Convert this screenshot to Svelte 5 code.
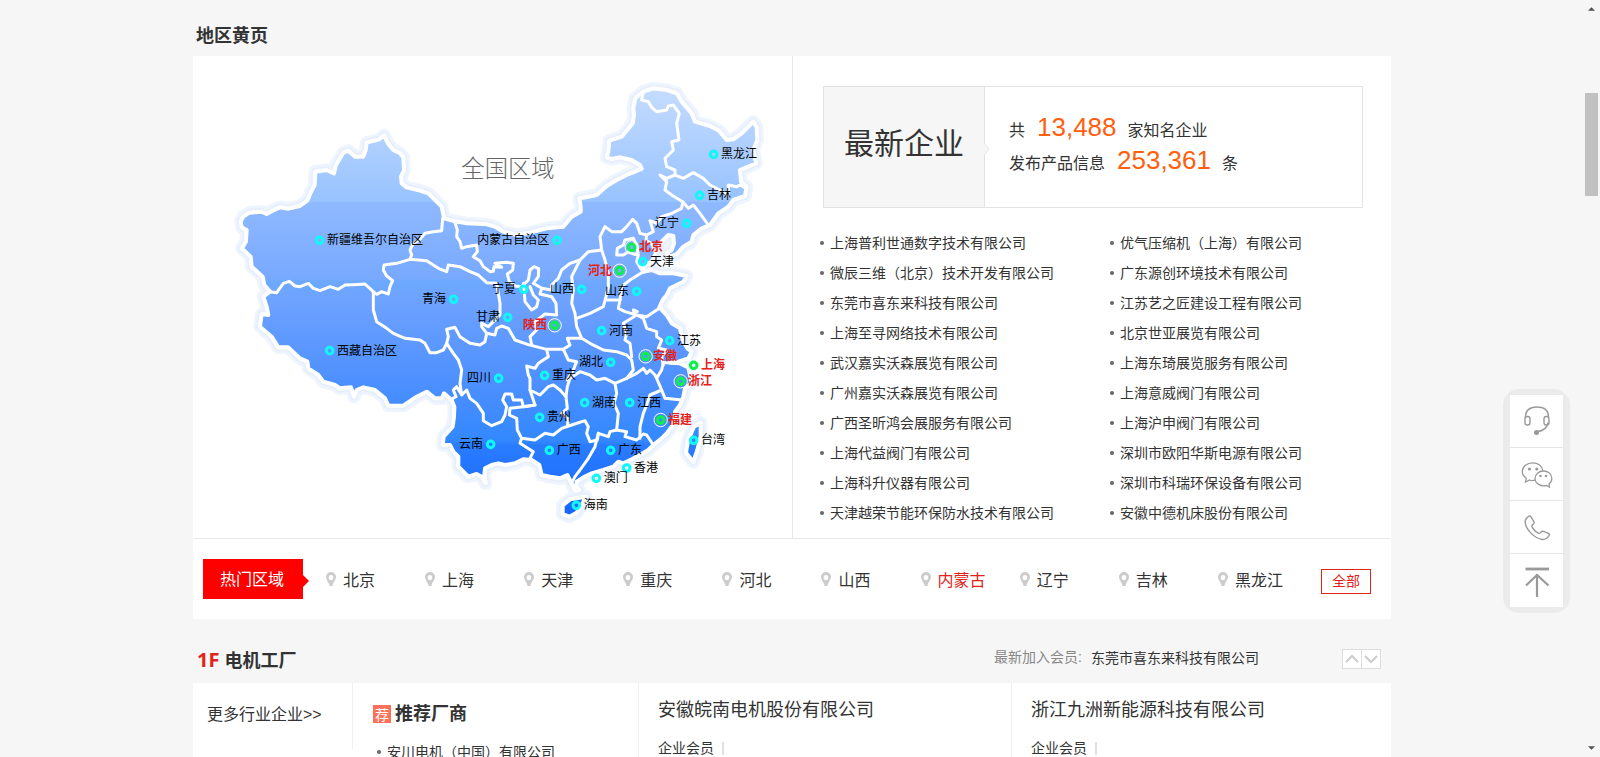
<script>
  const provinces = [
    { name: '新疆维吾尔自治区', x: 299, y: 511 },
    { name: '青海', x: 701, y: 688, left: true },
    { name: '西藏自治区', x: 329, y: 842 },
    { name: '四川', x: 836, y: 925, left: true },
    { name: '云南', x: 812, y: 1123, left: true },
    { name: '黑龙江', x: 1481, y: 253 },
    { name: '吉林', x: 1439, y: 376 },
    { name: '辽宁', x: 1400, y: 460, left: true },
    { name: '内蒙古自治区', x: 1011, y: 511, left: true },
    { name: '北京', x: 1235, y: 532, hot: true },
    { name: '天津', x: 1268, y: 575 },
    { name: '河北', x: 1199, y: 602, left: true, hot: true },
    { name: '宁夏', x: 911, y: 658, left: true },
    { name: '山西', x: 1085, y: 658, left: true },
    { name: '山东', x: 1250, y: 664, left: true },
    { name: '甘肃', x: 863, y: 742, left: true },
    { name: '陕西', x: 1004, y: 766, left: true, hot: true },
    { name: '河南', x: 1145, y: 782 },
    { name: '江苏', x: 1349, y: 812 },
    { name: '安徽', x: 1277, y: 859, hot: true },
    { name: '湖北', x: 1172, y: 877, left: true },
    { name: '上海', x: 1421, y: 886, hot: true },
    { name: '重庆', x: 974, y: 916 },
    { name: '浙江', x: 1382, y: 934, hot: true },
    { name: '湖南', x: 1094, y: 998 },
    { name: '江西', x: 1229, y: 998 },
    { name: '贵州', x: 959, y: 1042 },
    { name: '福建', x: 1322, y: 1050, hot: true },
    { name: '广西', x: 988, y: 1141 },
    { name: '广东', x: 1172, y: 1141 },
    { name: '台湾', x: 1421, y: 1111 },
    { name: '香港', x: 1220, y: 1194 },
    { name: '澳门', x: 1129, y: 1225 },
    { name: '海南', x: 1069, y: 1306 }
  ];

  const companies = [
    '上海普利世通数字技术有限公司', '优气压缩机（上海）有限公司',
    '微辰三维（北京）技术开发有限公司', '广东源创环境技术有限公司',
    '东莞市喜东来科技有限公司', '江苏艺之匠建设工程有限公司',
    '上海至寻网络技术有限公司', '北京世亚展览有限公司',
    '武汉嘉实沃森展览有限公司', '上海东琦展览服务有限公司',
    '广州嘉实沃森展览有限公司', '上海意威阀门有限公司',
    '广西圣昕鸿会展服务有限公司', '上海沪申阀门有限公司',
    '上海代益阀门有限公司', '深圳市欧阳华斯电源有限公司',
    '上海科升仪器有限公司', '深圳市科瑞环保设备有限公司',
    '天津越荣节能环保防水技术有限公司', '安徽中德机床股份有限公司'
  ];

  const areas = ['北京', '上海', '天津', '重庆', '河北', '山西', '内蒙古', '辽宁', '吉林', '黑龙江'];
  const activeArea = '内蒙古';

  const mainland = 'M62 455 70 440 88 428 125 425 140 432 158 422 180 412 205 416 240 408 262 392 272 368 284 345 286 305 320 300 342 310 348 285 370 248 385 242 405 260 430 260 437 240 440 218 478 208 492 196 505 222 520 240 540 250 550 262 552 300 543 320 545 340 560 352 600 362 625 370 650 395 665 410 672 445 705 454 740 460 800 463 825 470 850 485 890 495 930 488 980 475 1030 470 1055 440 1082 425 1082 410 1078 385 1105 380 1130 375 1160 348 1190 330 1220 315 1245 305 1265 296 1260 285 1235 270 1200 262 1175 267 1160 262 1165 245 1168 212 1205 200 1220 182 1238 160 1242 135 1240 115 1246 85 1270 65 1300 55 1340 60 1370 70 1385 95 1415 130 1425 155 1470 168 1497 182 1520 210 1540 208 1565 190 1600 155 1610 172 1612 210 1600 240 1608 280 1560 300 1563 335 1580 350 1575 378 1540 390 1525 410 1495 430 1470 465 1445 475 1420 495 1415 515 1390 530 1370 552 1350 560 1340 550 1355 540 1362 520 1360 498 1345 495 1325 515 1310 545 1295 575 1268 588 1270 605 1295 600 1320 610 1360 610 1400 618 1390 635 1350 655 1340 675 1328 690 1318 712 1340 735 1355 760 1380 775 1388 810 1402 835 1415 845 1405 865 1375 875 1350 878 1380 880 1405 892 1412 925 1415 940 1395 955 1390 980 1380 1005 1365 1025 1365 1045 1355 1070 1340 1090 1325 1105 1300 1125 1285 1140 1260 1155 1235 1168 1210 1180 1195 1175 1180 1190 1150 1200 1115 1210 1090 1222 1070 1235 1068 1250 1078 1260 1065 1262 1055 1240 1042 1215 1020 1225 990 1220 965 1215 958 1185 935 1170 910 1168 885 1180 855 1185 835 1180 815 1185 795 1195 793 1215 797 1240 785 1220 770 1212 745 1220 725 1200 715 1190 715 1160 700 1145 690 1125 668 1125 671 1100 698 1070 702 1040 703 1010 695 990 672 970 665 985 645 985 620 965 590 980 550 1007 505 1007 495 985 465 960 430 952 410 960 402 980 393 952 360 955 345 945 310 935 295 915 265 895 262 875 240 865 205 832 175 832 155 800 120 770 125 732 145 735 140 710 130 680 150 665 133 645 128 620 95 590 92 560 66 535 78 515 80 480 65 472Z';
  const islands = 'M1442 1058 1422 1070 1404 1112 1398 1148 1420 1176 1432 1140 1442 1100ZM1028 1306 1050 1288 1098 1280 1082 1310 1070 1328 1048 1340 1028 1332Z';

  const borders = [
    'M150 665 170 668 190 640 208 634 225 648 240 650 265 640 280 655 300 662 330 650 355 658 375 645 400 644 435 642 460 665 470 673 485 665 505 672 510 650 518 632 500 618 490 600 492 585 530 580 570 568 575 555 570 540 580 520 598 510 615 490 640 485 665 482 668 445',
    'M570 568 620 572 655 595 680 605 685 585 720 590 750 605 775 615 800 638 830 640 840 700 840 735 820 755 805 770 785 760 785 770 800 790 825 795 830 775 845 768 865 775 885 810 925 824 980 838',
    'M705 457 712 480 710 500 720 515 725 535 740 530 770 525 772 545 760 560 780 572 790 590 810 605 820 604 822 590 845 592 825 580 860 577 880 580 878 600 862 612 868 635 885 648 905 650 925 630 930 600 942 590 956 596 955 620 940 640 965 655 960 672 995 680 1008 700 1010 735 975 732 945 755 950 780 930 800 935 824',
    'M460 665 460 720 470 755 500 775 520 790 555 805 600 810 615 820 630 848 650 848 670 840 680 820 685 800 680 778 705 772 720 800 750 820 780 825 795 815 800 790',
    'M680 820 700 850 715 870 725 900 720 940 725 975 710 950 700 960 708 980 690 990M725 975 740 960 750 985 770 1000 790 1030 790 1052 815 1067 845 1055 855 1035 860 1010 848 990 855 972 875 972 880 990 905 990 910 1010 945 1005',
    'M911 640 915 695 935 720 950 710 955 690 940 675 930 650',
    'M980 838 985 860 955 880 945 895 920 888 925 915 930 925 930 960 960 975 985 950 1000 945 1020 960 1038 980 1042 950 1050 925 1080 905 1110 915 1130 930 1155 925 1185 940M980 838 1030 838 1045 870 1070 875 1060 900 1042 930',
    'M930 960 935 975 945 1005 910 1010 870 1015 868 1035 890 1045 892 1080 905 1105 945 1110 975 1090 1000 1095 1025 1075 1055 1065 1095 1052 1105 1070 1100 1090 1110 1115 1132 1110 1135 1090',
    'M1038 980 1042 1015 1025 1030 1045 1045 1042 1068M905 1105 900 1120 940 1145 930 1165',
    'M1135 1090 1125 1130 1105 1165 1080 1200 1065 1220 1055 1240M1135 1090 1165 1100 1170 1085 1190 1080 1220 1085 1215 1100 1250 1110 1270 1092 1280 1095 1300 1125',
    'M1185 940 1190 970 1182 1000 1195 1030 1190 1080M1185 940 1220 925 1250 910 1270 895 1280 910 1290 900 1305 915 1310 925 1325 960 1290 975 1280 1005 1270 1030 1260 1070 1260 1105M1325 960 1335 985 1385 990M1310 925 1325 900 1330 878 1360 878',
    'M1030 838 1050 825 1042 805 1085 805 1110 820 1150 840 1190 845 1220 855 1235 870 1240 900 1220 925',
    'M1080 570 1055 620 1060 660 1055 700 1065 730 1070 770 1085 805M1070 745 1110 730 1150 710 1158 680 1165 650 1165 610 1155 570 1145 540',
    'M1160 690 1200 690 1195 715 1215 725 1250 735 1210 760 1220 790 1215 810 1230 820 1235 860M1250 735 1270 745 1280 775 1310 785 1310 800 1325 810 1315 835 1340 840 1325 860 1330 885M1250 735 1280 740 1310 720 1325 712M1245 738 1240 720 1252 725',
    'M965 655 995 660 995 645 1015 625 1025 600 1050 580 1080 570 1105 545 1145 540 1140 500 1155 470 1175 485 1205 485 1220 470 1238 448 1250 460 1260 490 1280 495 1278 512 1295 520 1305 545M1280 495 1300 485 1290 452 1310 460 1325 440 1355 430 1385 415 1388 395',
    'M1270 605 1230 630 1205 650 1200 690M1190 555 1192 535 1210 525 1215 510 1240 505 1250 525 1255 555 1240 552 1225 545 1210 555ZM1255 555 1250 575 1265 600',
    'M1270 65 1265 90 1285 95 1295 112 1310 125 1340 120 1345 108 1360 105 1378 130 1370 160 1377 210 1355 215 1360 240 1335 265 1340 290 1365 300 1365 315 1390 325 1420 308 1450 325 1470 345 1500 360 1525 375 1525 345 1550 350 1560 345 1578 355M1365 315 1340 325 1320 315 1340 335 1335 360 1355 375 1388 395 1405 415 1420 405 1440 430 1465 465'
  ];
</script>

<div class="page">
  <main class="wrap">
    <h2 class="section-title">地区黄页</h2>
    <section class="panel">
      <div class="region">
        <div class="map">
          <svg viewBox="0 0 1680 1392" role="group" aria-label="全国区域">
            <defs>
              <linearGradient id="land" gradientUnits="userSpaceOnUse" x1="0" y1="50" x2="0" y2="1330">
                <stop offset="0" stop-color="#c5dcff" />
                <stop offset="0.268" stop-color="#98c3ff" />
                <stop offset="0.272" stop-color="#8fb9ff" />
                <stop offset="0.45" stop-color="#78a9ff" />
                <stop offset="0.455" stop-color="#6ca9ff" />
                <stop offset="0.5" stop-color="#6ea2ff" />
                <stop offset="0.7" stop-color="#4c8fff" />
                <stop offset="0.83" stop-color="#3388ff" />
                <stop offset="0.84" stop-color="#2a7cff" />
                <stop offset="1" stop-color="#1766ff" />
              </linearGradient>
            </defs>
            <g stroke-linejoin="round" stroke-linecap="round">
              <path d={mainland + islands} fill="none" stroke="#eff5ff" stroke-width="40" />
              <path d={mainland + islands} fill="none" stroke="#e7effc" stroke-width="24" />
              <path d={mainland + islands} fill="url(#land)" stroke="#fff" stroke-width="12" />
              {#each borders as d}
                <path {d} fill="none" stroke="#fff" stroke-width="9" />
              {/each}
            </g>
            <text class="map-title" x="724" y="322">全国区域</text>
            {#each provinces as p}
              <a href="#area">
                {#if p.hot}<circle cx={p.x} cy={p.y} r="20" fill="none" stroke="#fff" stroke-width="3" />{/if}
                <circle cx={p.x} cy={p.y} r="10" fill="none" stroke={p.hot ? '#0cf04c' : '#0ff7f7'} stroke-width="9" />
                <text
                  class:hot={p.hot}
                  x={p.left ? p.x - 23 : p.x + 22}
                  y={p.y + 12}
                  text-anchor={p.left ? 'end' : 'start'}>{p.name}</text>
              </a>
            {/each}
          </svg>
        </div>
        <div class="latest">
          <div class="stats">
            <h3>最新企业</h3>
            <div class="figures">
              <svg class="notch" viewBox="0 0 6 12" aria-hidden="true"><path d="M0 0 5 6 0 12" fill="#f6f6f6" stroke="#e3e3e3" /></svg>
              <p>共<strong>13,488</strong>家知名企业</p>
              <p>发布产品信息<strong>253,361</strong>条</p>
            </div>
          </div>
          <ul class="companies">
            {#each companies as c}
              <li><a href="#company">{c}</a></li>
            {/each}
          </ul>
        </div>
      </div>
      <nav class="hot-areas" aria-label="热门区域">
        <span class="tag">热门区域</span>
        <ul>
          {#each areas as a}
            <li>
              <svg viewBox="0 0 10 14" aria-hidden="true"><path fill-rule="evenodd" d="M5 0a5 5 0 0 0-5 5c0 3 3 5 3.500 9h3C7 10 10 8 10 5a5 5 0 0 0-5-5Zm0 3a2.300 2.600 0 0 1 0 5.200A2.300 2.600 0 0 1 5 3Z" fill="#ccc" /></svg>
              <a href="#area" class:active={a === activeArea}>{a}</a>
            </li>
          {/each}
        </ul>
        <a class="all" href="#all">全部</a>
      </nav>
    </section>

    <header class="floor-head">
      <h2><span>1F</span>电机工厂</h2>
      <div class="joined">
        <span>最新加入会员:</span>
        <a href="#company">东莞市喜东来科技有限公司</a>
        <div class="pager">
          <button aria-label="上一个"><svg viewBox="0 0 14 10"><path d="M1 8 7 2l6 6" /></svg></button>
          <button aria-label="下一个"><svg viewBox="0 0 14 10"><path d="M1 2l6 6 6-6" /></svg></button>
        </div>
      </div>
    </header>
    <section class="floor">
      <div class="more"><a href="#more">更多行业企业&gt;&gt;</a></div>
      <div class="picks">
        <h3><i>荐</i>推荐厂商</h3>
        <ul><li><a href="#company">安川电机（中国）有限公司</a></li></ul>
      </div>
      <article>
        <h4>安徽皖南电机股份有限公司</h4>
        <p>企业会员</p>
      </article>
      <article>
        <h4>浙江九洲新能源科技有限公司</h4>
        <p>企业会员</p>
      </article>
    </section>
  </main>

  <aside class="tools">
    <a href="#service" aria-label="客服">
      <svg viewBox="0 0 32 32" fill="none" stroke="#999" stroke-width="1.400"><path d="M4.500 12C4.500 5 9.500 2 16 2s11.500 3 11.500 10M27 17.500c-1 5.500-5 8.500-10.500 9" /><rect x="4" y="11.500" width="5" height="8.500" rx="2.200" /><rect x="23" y="11.500" width="5" height="8.500" rx="2.200" /><circle cx="15.500" cy="27.500" r="1.800" fill="#999" /></svg>
    </a>
    <a href="#wechat" aria-label="微信">
      <svg viewBox="0 0 32 32" fill="none" stroke="#999" stroke-width="1.300"><path d="M14 22.200c-2 .6-3.800.5-5.500-.2L4.500 24l.8-3.800C2.800 18.500 1.300 16 1.300 13.500 1.300 8.500 6 4.800 11.800 4.800c5.300 0 9.300 3.200 10 7.800" /><path d="M30.800 20.500c0 2.200-1 4.200-2.800 5.500l.5 3-3-1.500c-5.800 1.500-11.500-2.200-11.500-7 0-4.300 3.800-7.500 8.500-7.500s8.300 3.200 8.300 7.500Z" /><g fill="#999" stroke="none"><circle cx="8.500" cy="11" r="1.600" /><circle cx="15.800" cy="11" r="1.600" /><circle cx="19.500" cy="18" r="1.300" /><circle cx="25" cy="18" r="1.300" /></g></svg>
    </a>
    <a href="#phone" aria-label="电话">
      <svg viewBox="0 0 32 32" fill="none" stroke="#999" stroke-width="1.400" stroke-linejoin="round"><path d="M4.200 10c.5-2.300 2-3.800 3.700-4.800.9-.5 1.600-.1 2.100.7l2.900 4.800c.5.900.3 1.600-.4 2.300-2.200 1.800-2 2.300-.9 4 1.500 2.200 3.500 4.200 5.700 5.200 1.100.5 1.800.2 2.700-1 .8-1 1.500-1.200 2.500-.8l5 2c1.100.5 1.200 1.200.6 2.100-1.400 2.500-3.800 4.200-6.800 4C13.700 27.500 3.700 18 4.200 10Z" /></svg>
    </a>
    <a href="#top" aria-label="返回顶部">
      <svg viewBox="0 0 32 32" fill="none" stroke="#999" stroke-width="2.200"><path d="M4.500 4h23.500" stroke-width="2.800" /><path d="M5 20.500 16 10l11.500 10.500M16 10v22" /></svg>
    </a>
  </aside>

  <div class="scroller" aria-hidden="true">
    <svg viewBox="0 0 8 4"><path d="M0 4 4 0l4 4Z" /></svg>
    <span></span>
    <svg viewBox="0 0 8 4"><path d="M0 0h8L4 4Z" /></svg>
  </div>
</div>

<style>
  :global(body) {
    margin: 0;
    background: #f6f6f6;
    color: #333;
    font: 14px/30px "Liberation Sans", "Noto Sans CJK SC", sans-serif;
  }
  * { box-sizing: border-box; }
  h2, h3, h4, p, ul { margin: 0; padding: 0; }
  ul { list-style: none; }
  a { color: inherit; text-decoration: none; }

  .page {
    height: 100vh;
    overflow: hidden;
    padding-right: 16px;
  }
  .wrap { max-width: 1198px; margin: 0 auto; }
  .section-title {
    padding: 21px 3px 5px;
    font-size: 18px;
  }
  .panel { background: #fff; }
  .region {
    display: grid;
    grid-template-columns: 1fr 1fr;
    border-bottom: 1px solid #e8e8e8;
  }
  .map { padding: 14px 12px 4px 27px; }
  .map svg { display: block; width: 100%; }
  .map text { font-size: 36px; fill: #000; }
  .map text.hot { fill: #e2231a; font-weight: 700; }
  .map text.map-title { font-size: 70px; font-weight: 300; fill: #666; }

  .latest {
    border-left: 1px solid #e8e8e8;
    padding: 30px 28px 9px 30px;
  }
  .stats {
    display: flex;
    height: 122px;
    border: 1px solid #e3e3e3;
  }
  .stats h3 {
    width: 161px;
    background: #f6f6f6;
    border-right: 1px solid #e3e3e3;
    font-size: 30px;
    font-weight: 400;
    line-height: 114px;
    text-align: center;
  }
  .figures {
    position: relative;
    padding: 24px;
    font-size: 16px;
    line-height: 33px;
  }
  .figures p { height: 33px; }
  .figures strong {
    margin: 0 11px 0 12px;
    color: #ff6010;
    font-size: 26px;
    font-weight: 400;
  }
  .notch {
    position: absolute;
    left: -1px;
    top: 56px;
    width: 6px;
    height: 12px;
  }
  .companies {
    display: grid;
    grid-template-columns: 290px 1fr;
    margin: 20px -20px 0 -3px;
  }
  .companies li, .picks li {
    display: flex;
    align-items: center;
    gap: 6px;
    white-space: nowrap;
  }
  .companies li::before, .picks li::before {
    content: "";
    width: 4px;
    height: 4px;
    border-radius: 2px;
    background: #666;
  }

  .hot-areas {
    display: flex;
    align-items: center;
    height: 80px;
    padding: 0 20px 0 10px;
    font-size: 16px;
  }
  .tag {
    position: relative;
    width: 100px;
    height: 40px;
    padding-right: 2px;
    background: #f00;
    color: #fff;
    line-height: 42px;
    text-align: center;
  }
  .tag::after {
    content: "";
    position: absolute;
    left: 100%;
    top: 16px;
    border: 6px solid transparent;
    border-left-color: #f00;
    border-right: 0;
  }
  .hot-areas ul {
    flex: 1;
    display: grid;
    grid-template-columns: repeat(10, 1fr);
    padding-left: 23px;
  }
  .hot-areas li {
    display: flex;
    align-items: center;
    gap: 7px;
    line-height: 34px;
    white-space: nowrap;
  }
  .hot-areas li a { padding-top: 4px; }
  .hot-areas li svg { width: 10px; height: 14px; }
  .hot-areas .active { color: #e2231a; }
  .all {
    width: 50px;
    margin-left: 4px;
    margin-top: 4px;
    border: 1px solid #e2231a;
    color: #e2231a;
    font-size: 14px;
    line-height: 23px;
    text-align: center;
  }

  .floor-head {
    display: flex;
    justify-content: space-between;
    align-items: center;
    height: 64px;
    padding: 16px 10px 0 4px;
  }
  .floor-head h2 { padding-top: 2px; font-size: 18px; }
  .floor-head h2 span {
    margin-right: 5px;
    color: #e2231a;
    font: 700 20px/30px "Noto Sans", sans-serif;
  }
  .joined { display: flex; align-items: center; line-height: 28px; }
  .joined span { color: #888; margin-right: 9px; padding-bottom: 4px; }
  .joined a { padding-bottom: 2px; }
  .pager { display: flex; margin-left: 83px; }
  .pager button {
    display: flex;
    align-items: center;
    justify-content: center;
    width: 20px;
    height: 20px;
    padding: 0;
    border: 1px solid #ddd;
    background: #fff;
  }
  .pager button + button { margin-left: -1px; }
  .pager svg { width: 14px; height: 10px; fill: none; stroke: #ccc; stroke-width: 2; }

  .floor {
    display: grid;
    grid-template-columns: 160px 286px 373px 1fr;
    background: #fff;
  }
  .more {
    height: 66px;
    padding: 17px 14px;
    border-right: 1px solid #f0f0f0;
    font-size: 16px;
  }
  .picks { padding: 16px 20px 60px; border-right: 1px solid #f0f0f0; }
  .picks h3 {
    display: flex;
    align-items: center;
    gap: 4px;
    font-size: 18px;
  }
  .picks i {
    width: 18px;
    background: #ff705a;
    color: #fff;
    font: 400 14px/18px "Noto Sans CJK SC", sans-serif;
    text-align: center;
  }
  .picks ul { padding: 8px 4px; }
  .floor article { padding: 12px 19px; border-right: 1px solid #f0f0f0; }
  .floor article:last-child { border-right: 0; }
  .floor h4 { font-size: 18px; font-weight: 400; }
  .floor p {
    display: flex;
    align-items: center;
    gap: 8px;
    margin-top: 8px;
  }
  .floor p::after {
    content: "";
    width: 2px;
    height: 13px;
    background: #e0e0e0;
  }

  .tools {
    position: fixed;
    right: 30px;
    top: 389px;
    padding: 6px 7px;
    border-radius: 16px;
    background: #ebebeb;
  }
  .tools a {
    display: flex;
    align-items: center;
    justify-content: center;
    width: 53px;
    height: 53px;
    border-bottom: 1px solid #e6e6e6;
    background: #fff;
  }
  .tools a:last-child { border-bottom: 0; }
  .tools svg { width: 32px; height: 32px; }

  .scroller {
    position: fixed;
    right: 0;
    top: 0;
    bottom: 0;
    width: 16px;
    display: flex;
    flex-direction: column;
    align-items: flex-start;
    justify-content: space-between;
    padding: 7px 2px 7px 1px;
    background: #f6f6f6;
  }
  .scroller svg { width: 7px; height: 4px; margin-left: 3px; fill: #505050; }
  .scroller span {
    width: 13px;
    height: 103px;
    margin: 82px 0 auto;
    background: #c1c1c1;
  }
</style>
